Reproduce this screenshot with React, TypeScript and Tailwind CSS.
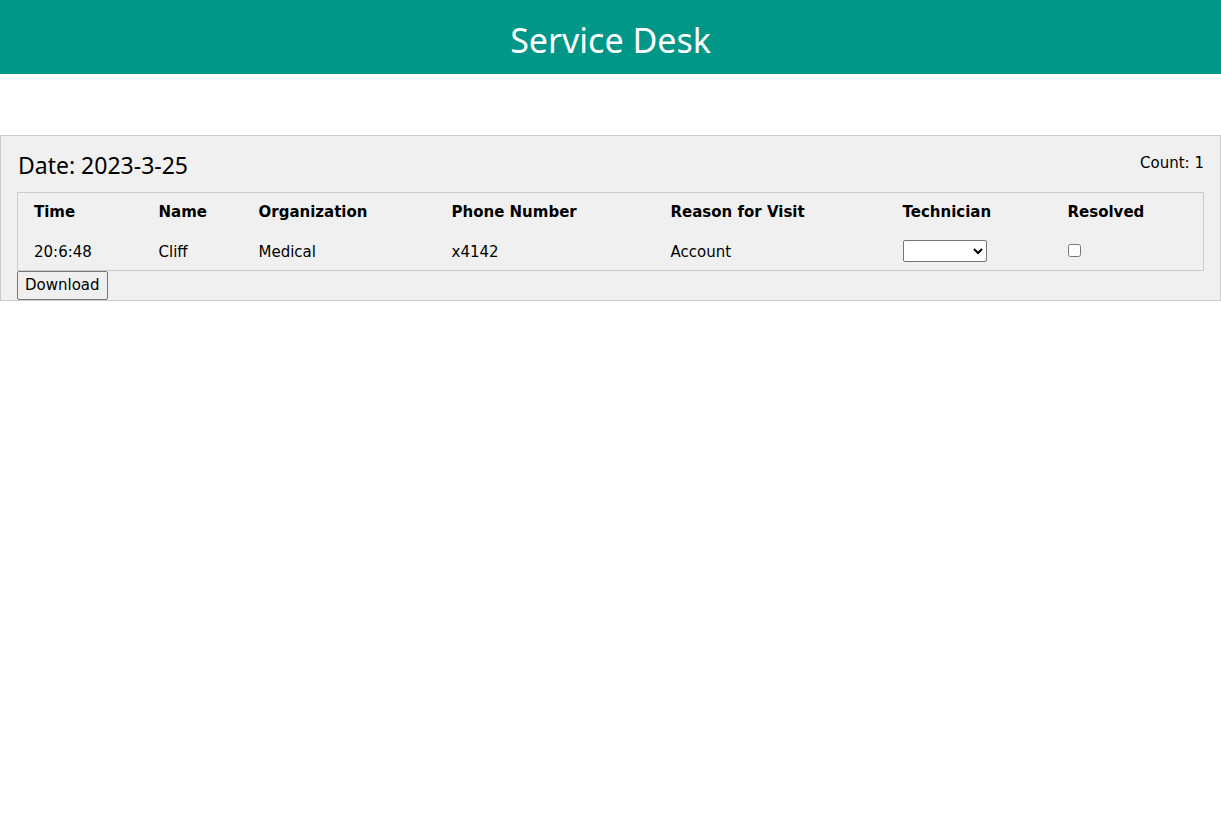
export default function App() {
  const cols = [
    { label: 'Time', w: 'w-[125px]' },
    { label: 'Name', w: 'w-[100px]' },
    { label: 'Organization', w: 'w-[193px]' },
    { label: 'Phone Number', w: 'w-[219px]' },
    { label: 'Reason for Visit', w: 'w-[232px]' },
    { label: 'Technician', w: 'w-[165px]' },
    { label: 'Resolved', w: '' },
  ];

  const row = ['20:6:48', 'Cliff', 'Medical', 'x4142', 'Account'];

  return (
    <div className="min-h-screen bg-white font-['DejaVu_Sans',sans-serif] text-black">
      <header className="h-[74px] bg-[#009688] flex items-center justify-center pt-[6px]">
        <h1 className="font-['Noto_Sans',sans-serif] text-[34px] text-white leading-none">Service Desk</h1>
      </header>

      <div className="mt-[61px] border border-[#cccccc] bg-[#f0f0f0] px-4 pt-[14px]">
        <div className="flex items-start justify-between">
          <h2 className="font-['Noto_Sans',sans-serif] text-[23px] leading-[30px] pl-[1px]">Date: 2023-3-25</h2>
          <span className="text-[15px] mt-[2px]">Count: 1</span>
        </div>

        <table className="mt-3 w-full table-fixed border border-[#cccccc] border-collapse text-[15px]">
          <thead>
            <tr className="h-[38px]">
              {cols.map(c => (
                <th key={c.label} className={`${c.w} pl-4 text-left font-bold`}>{c.label}</th>
              ))}
            </tr>
          </thead>
          <tbody>
            <tr className="h-[40px]">
              {row.map(v => (
                <td key={v} className="pl-4 pt-[4px]">{v}</td>
              ))}
              <td className="pl-4">
                <select className="w-[84px] h-[22px] bg-white border border-[#767676] rounded-[2px] text-[13px] align-middle">
                  <option></option>
                </select>
              </td>
              <td className="pl-4">
                <input type="checkbox" className="w-[13px] h-[13px] align-middle" />
              </td>
            </tr>
          </tbody>
        </table>

        <button className="block h-[29px] px-[7px] border border-[#767676] rounded-[2px] bg-[#efefef] text-[15px]">
          Download
        </button>
      </div>
    </div>
  );
}
